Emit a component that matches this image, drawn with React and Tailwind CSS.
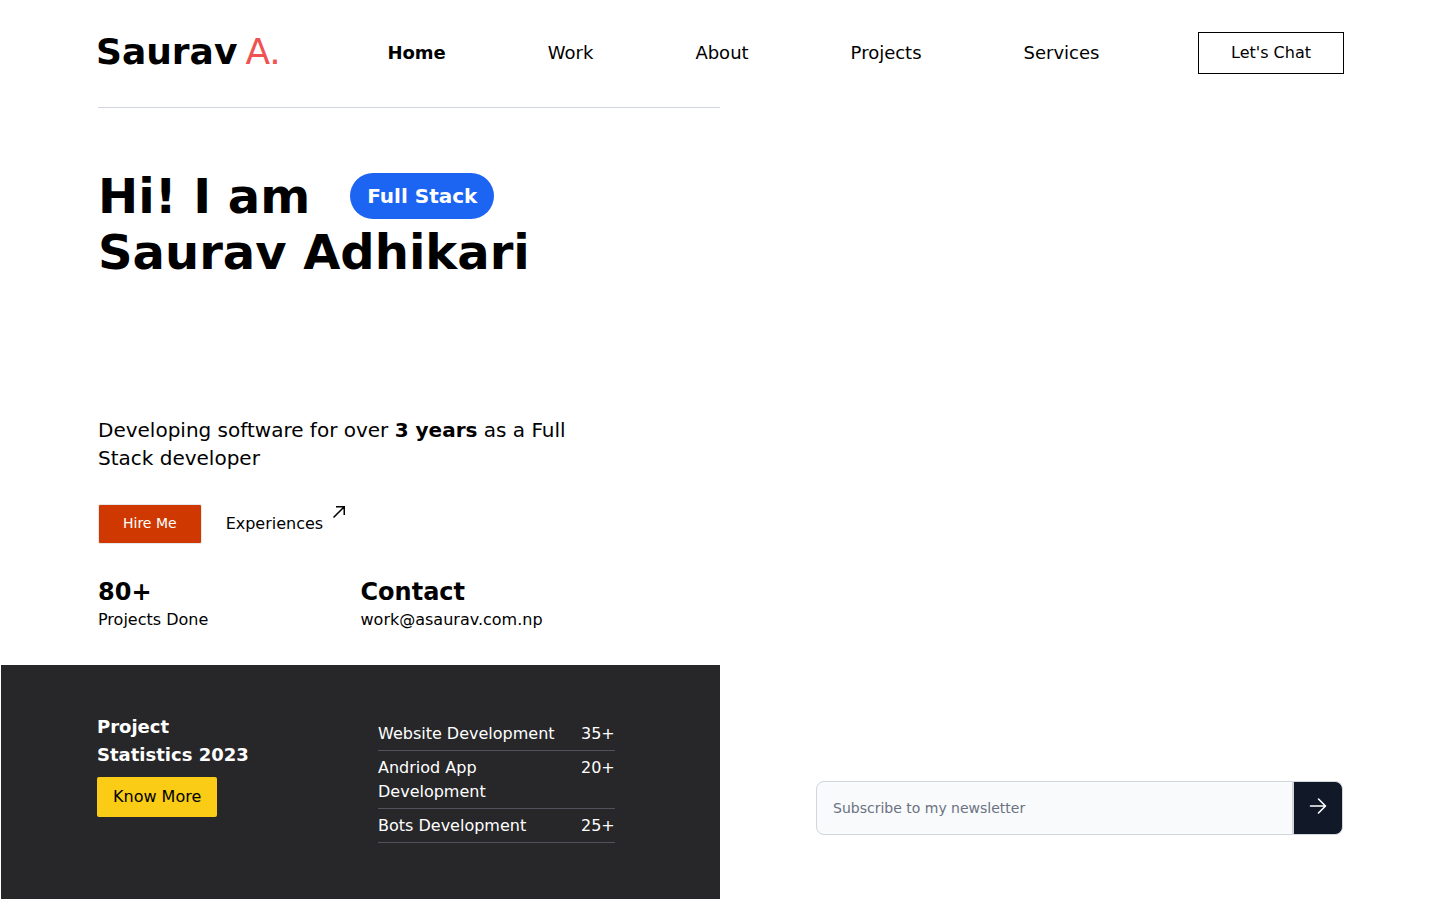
const links = ['Work', 'About', 'Projects', 'Services'];

const stats = [
  ['Website Development', '35+'],
  ['Andriod App Development', '20+'],
  ['Bots Development', '25+'],
];

function ArrowUpRight({ className }) {
  return (
    <svg
      className={className}
      viewBox="0 0 16 16"
      fill="none"
      stroke="currentColor"
      strokeWidth="1.5"
      aria-hidden="true"
    >
      <path d="M2.5 13.5l11-11M5 2.75h8.25V11" />
    </svg>
  );
}

function ArrowRight({ className }) {
  return (
    <svg
      className={className}
      viewBox="0 0 24 24"
      fill="none"
      stroke="currentColor"
      strokeWidth="1.6"
      strokeLinecap="round"
      strokeLinejoin="round"
      aria-hidden="true"
    >
      <path d="M4.5 12h15M12.5 5l7 7-7 7" />
    </svg>
  );
}

function Header() {
  return (
    <header className="flex h-[107px] items-start justify-between px-24 pt-8">
      <a href="#" className="flex items-center gap-2 text-4xl leading-10">
        <span className="font-bold">Saurav</span>
        <span className="text-[#f05252]">A.</span>
      </a>
      <nav className="ml-2 flex h-[42px] items-center gap-[102px] text-lg">
        <a href="#" className="font-bold">Home</a>
        {links.map((link) => (
          <a key={link} href="#">{link}</a>
        ))}
      </nav>
      <button type="button" className="h-[42px] border border-black px-8">Let's Chat</button>
    </header>
  );
}

function Intro() {
  return (
    <section className="ml-[98px] border-t border-gray-300 pt-[60px] pb-[33px]">
      <h1 className="text-5xl leading-[56px] font-bold">
        <span className="flex items-center gap-10">
          Hi! I am
          <span className="rounded-full bg-[#1c64f2] px-[17px] py-[9px] text-xl leading-7 text-white">Full Stack</span>
        </span>
        Saurav Adhikari
      </h1>
      <p className="mt-[136px] max-w-[500px] text-xl leading-7">
        Developing software for over <b>3 years</b> as a Full Stack developer
      </p>
      <div className="mt-8 flex items-center gap-6">
        <button type="button" className="h-10 rounded-xs border border-gray-200 bg-[#d03801] px-6 pb-0.5 text-sm text-white">
          Hire Me
        </button>
        <a href="#" className="flex items-start gap-2">
          Experiences
          <ArrowUpRight className="-mt-2 size-4" />
        </a>
      </div>
      <div className="mt-8 grid max-w-[525px] grid-cols-2">
        <div>
          <h2 className="text-2xl font-bold">80+</h2>
          <p>Projects Done</p>
        </div>
        <div>
          <h2 className="text-2xl font-bold">Contact</h2>
          <p>work@asaurav.com.np</p>
        </div>
      </div>
    </section>
  );
}

function Statistics() {
  return (
    <section className="mb-px ml-px flex flex-1 items-start justify-between bg-[#27272a] pt-12 pr-[105px] pb-14 pl-24 text-white">
      <div className="w-40">
        <h2 className="text-lg leading-7 font-bold">Project Statistics 2023</h2>
        <button type="button" className="mt-2 h-10 rounded-xs bg-[#facc15] px-4 text-black">Know More</button>
      </div>
      <table className="mt-1 w-[237px] text-left">
        <tbody>
          {stats.map(([name, count]) => (
            <tr key={name} className="border-b border-zinc-600 align-top">
              <th scope="row" className="pt-[5px] pb-1 font-normal">
                {name}
              </th>
              <td className="w-[34px] pt-[5px] pb-1">{count}</td>
            </tr>
          ))}
        </tbody>
      </table>
    </section>
  );
}

function Newsletter() {
  return (
    <form className="flex h-[54px]" onSubmit={(event) => event.preventDefault()}>
      <input
        type="email"
        aria-label="Subscribe to my newsletter"
        placeholder="Subscribe to my newsletter"
        className="min-w-0 flex-1 rounded-l-lg border border-gray-300 bg-gray-50 px-4 text-sm placeholder:text-gray-500"
      />
      <button
        type="submit"
        aria-label="Subscribe"
        className="flex w-[50px] items-center justify-center rounded-r-lg border border-gray-300 bg-[#111827] pb-1 text-white"
      >
        <ArrowRight className="size-6" />
      </button>
    </form>
  );
}

export default function App() {
  return (
    <div className='flex min-h-screen flex-col bg-white font-["DejaVu_Sans",sans-serif] text-base text-black'>
      <Header />
      <main className="grid flex-1 grid-cols-2">
        <div className="flex flex-col">
          <Intro />
          <Statistics />
        </div>
        <div className="flex flex-col justify-end pr-[97px] pb-[65px] pl-24">
          <Newsletter />
        </div>
      </main>
    </div>
  );
}
